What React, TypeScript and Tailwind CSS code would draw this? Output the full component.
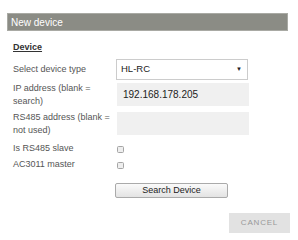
import React from 'react';

export default function App() {
  return (
    <div className="w-[298px] h-[240px] bg-white font-['Liberation_Sans',Arial,sans-serif] text-[9px] text-[#555] overflow-hidden">
      <div className="mt-[13px] ml-[7px] mr-[10px] h-[18px] bg-[#8b8c85] border border-[#a9aaa4] flex items-center pl-[3px] text-white text-[10px]">
        New device
      </div>

      <div className="pl-[13px] pt-[9px]">
        <div className="font-bold underline text-[#333] leading-[14px]">Device</div>

        <div className="flex items-center mt-[5px]">
          <div className="w-[103px]">Select device type</div>
          <div className="w-[132px] h-[21px] border border-[#ccc] bg-white flex items-center justify-between pl-[4px] pr-[5px] text-[#222] text-[9.5px]">
            <span>HL-RC</span>
            <span className="text-[6px]">▼</span>
          </div>
        </div>

        <div className="flex items-start mt-[3px]">
          <div className="w-[104px] leading-[13px] -mt-[1px]">IP address (blank = search)</div>
          <div className="w-[132px] h-[23px] bg-[#f0f0f0] flex items-center pl-[6px] text-[#222] text-[10px]">192.168.178.205</div>
        </div>

        <div className="flex items-start mt-[4px]">
          <div className="w-[104px] leading-[13px] -mt-[1px]">RS485 address (blank = not used)</div>
          <div className="w-[132px] h-[23px] bg-[#f0f0f0]"></div>
        </div>

        <div className="flex items-center mt-[5px] h-[14px]">
          <div className="w-[104px]">Is RS485 slave</div>
          <div className="w-[7px] h-[7px] border border-[#a5a5a5] rounded-[1.5px] bg-[#eee]"></div>
        </div>

        <div className="flex items-center mt-[2px] h-[14px]">
          <div className="w-[104px]">AC3011 master</div>
          <div className="w-[7px] h-[7px] border border-[#a5a5a5] rounded-[1.5px] bg-[#eee]"></div>
        </div>

        <div className="flex mt-[11px]">
          <div className="w-[102px]"></div>
          <button className="w-[113px] h-[15px] border border-[#aaa] rounded-[2px] bg-gradient-to-b from-[#fafafa] to-[#e3e3e3] text-[9px] text-[#222] leading-none">
            Search Device
          </button>
        </div>
      </div>

      <div className="flex justify-end mr-[8px] mt-[15px]">
        <button className="w-[61px] h-[20px] bg-[#e2e2e2] text-[8px] tracking-[0.8px] text-[#999]">CANCEL</button>
      </div>
    </div>
  );
}
